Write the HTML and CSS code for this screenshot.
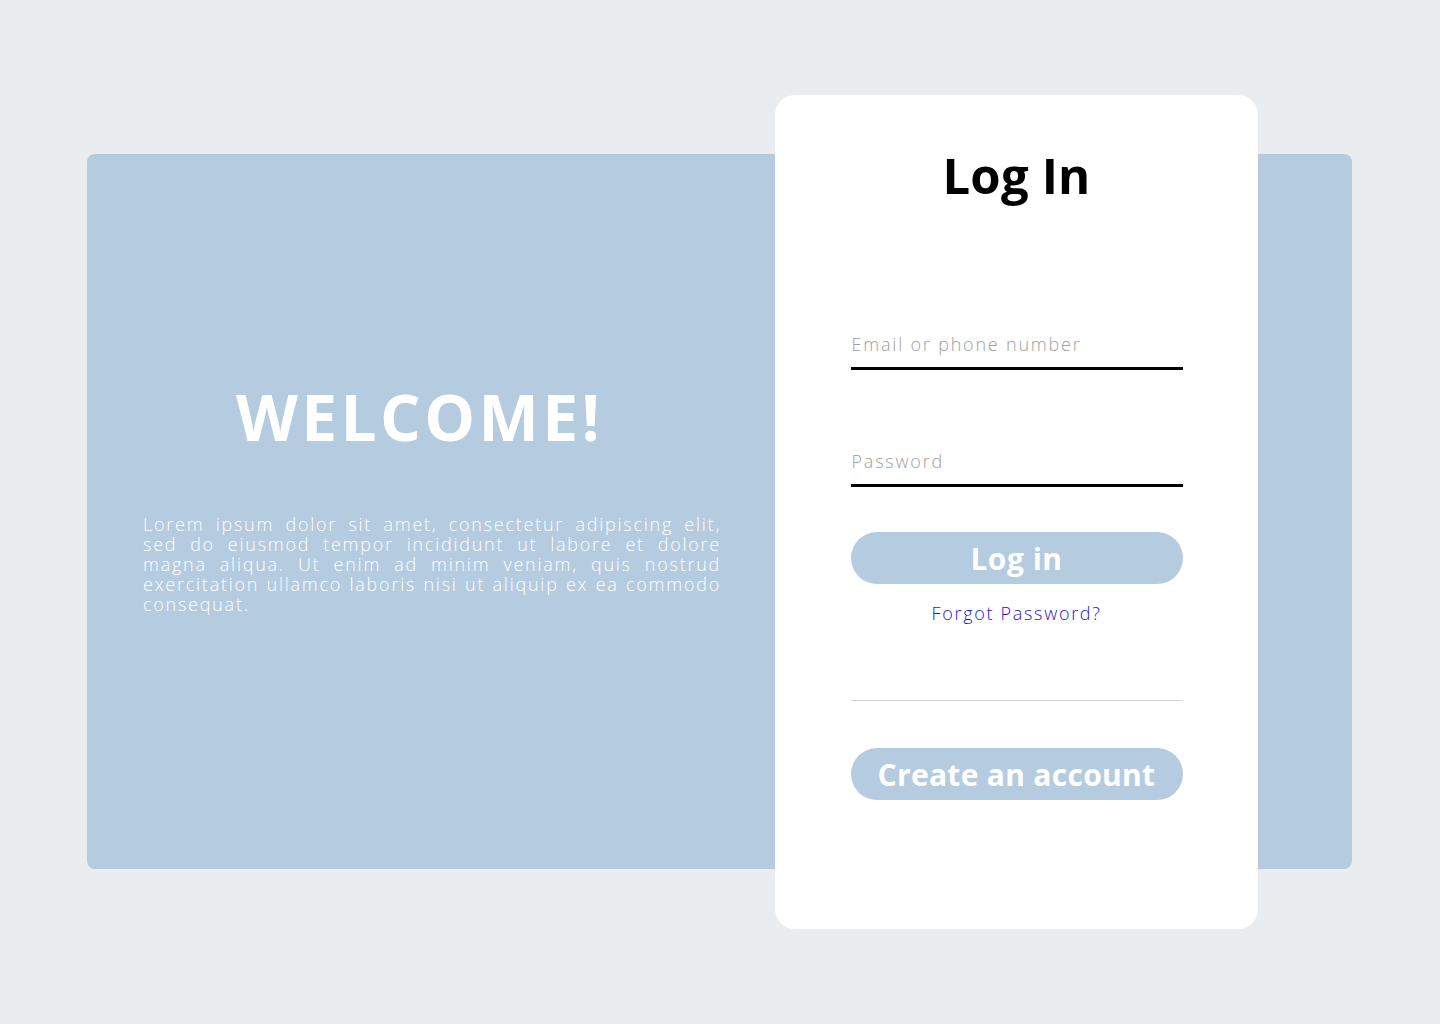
FILE: index.html
```html
<!DOCTYPE html>
<html lang="en">
<head>
<meta charset="utf-8">
<title>Log In</title>
<link rel="stylesheet" href="styles.css">
</head>
<body>
<main class="stage">
  <section class="panel">
    <div class="intro">
      <h1 class="welcome">WELCOME!</h1>
      <p class="lorem">Lorem ipsum dolor sit amet, consectetur adipiscing elit,<br>sed do eiusmod tempor incididunt ut labore et dolore<br>magna aliqua. Ut enim ad minim veniam, quis nostrud<br>exercitation ullamco laboris nisi ut aliquip ex ea commodo<br>consequat.</p>
    </div>
  </section>
  <section class="card">
    <h2 class="title">Log In</h2>
    <form class="form">
      <input class="field field-email" type="text" placeholder="Email or phone number">
      <input class="field field-pass" type="password" placeholder="Password">
      <button class="btn btn-login" type="button">Log in</button>
      <a class="forgot" href="#">Forgot Password?</a>
      <hr class="sep">
      <button class="btn btn-create" type="button">Create an account</button>
    </form>
  </section>
</main>
</body>
</html>
```
FILE: styles.css
```css
* { box-sizing: border-box; }

html, body {
  margin: 0;
  padding: 0;
}

body {
  background: #e9edf0;
  font-family: "Open Sans", "Liberation Sans", sans-serif;
  width: 1440px;
  height: 1024px;
  overflow: hidden;
}

.stage {
  display: grid;
  grid-template-columns: 87px 688px 483px 94px;
  grid-template-rows: 95px 59px 715px 60px;
}

.panel {
  grid-column: 2 / 5;
  grid-row: 3;
  background: #b5cbdf;
  border-radius: 8px;
  display: flex;
}

.intro {
  width: 688px;
  padding: 231px 0 0 56px;
}

.welcome {
  margin: 0 0 0 93px;
  font-family: "Open Sans", sans-serif;
  font-weight: 700;
  font-size: 64px;
  line-height: 64px;
  letter-spacing: 3.4px;
  color: #ffffff;
}

.lorem {
  margin: 65px 0 0 0;
  width: 578px;
  color: #ffffff;
  font-weight: 300;
  font-size: 18px;
  line-height: 20px;
  letter-spacing: 1.75px;
  text-align: justify;
  text-align-last: justify;
}

.card {
  grid-column: 3;
  grid-row: 2 / 5;
  background: #ffffff;
  border-radius: 20px;
  padding: 56px 0 0 0;
  display: flex;
  flex-direction: column;
  align-items: center;
}

.title {
  margin: 0;
  font-weight: 700;
  font-size: 49px;
  line-height: 49px;
  letter-spacing: 0.2px;
  color: #000000;
}

.form {
  width: 332px;
  margin-top: 121px;
  display: flex;
  flex-direction: column;
  align-items: stretch;
}

.field {
  display: block;
  width: 100%;
  height: 49px;
  margin: 0;
  padding: 0 0 0 1px;
  border: none;
  border-bottom: 3px solid #000000;
  background: transparent;
  outline: none;
  font-family: "Open Sans", sans-serif;
  font-weight: 300;
  font-size: 18px;
  letter-spacing: 1.8px;
  color: #333333;
}

.field::placeholder {
  color: #a0a0a0;
  opacity: 1;
}

.field-pass {
  margin-top: 68px;
}

.btn {
  display: block;
  width: 100%;
  height: 52px;
  margin: 0;
  padding: 0;
  border: none;
  border-radius: 26px;
  background: #b5cbdf;
  color: #ffffff;
  font-family: "Open Sans", sans-serif;
  font-weight: 700;
  font-size: 30px;
  line-height: 54px;
  cursor: pointer;
}

.btn-login {
  margin-top: 45px;
  letter-spacing: 0.5px;
}

.forgot {
  display: block;
  margin-top: 17px;
  text-align: center;
  font-weight: 300;
  font-size: 18px;
  line-height: 24px;
  letter-spacing: 1.7px;
  color: #2318c6;
  text-decoration: none;
}

.sep {
  margin: 75px 0 0 0;
  height: 1px;
  border: none;
  background: #d2d2d2;
}

.btn-create {
  margin-top: 47px;
  letter-spacing: 0.3px;
}
```
